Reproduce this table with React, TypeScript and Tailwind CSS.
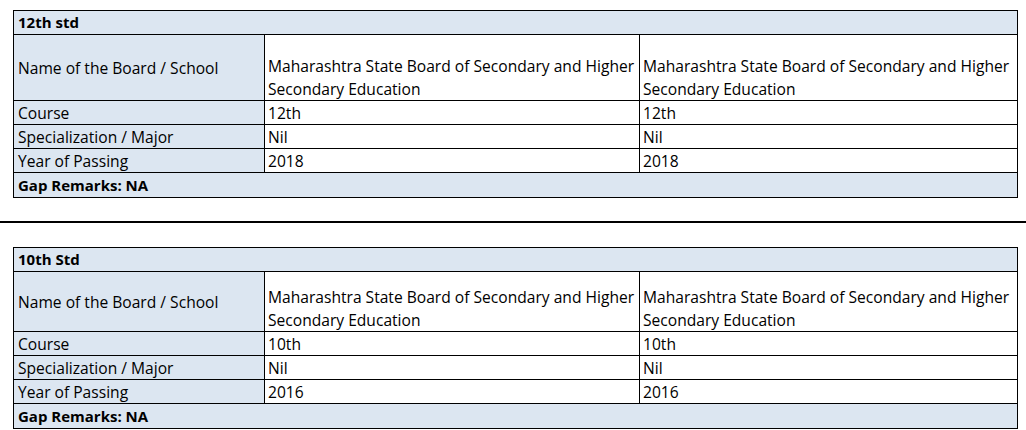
const font = { fontFamily: '"Open Sans", "Liberation Sans", sans-serif' };

interface Education {
  title: string;
  board: string;
  course: string;
  major: string;
  year: string;
  gap: string;
  nameRowHeight: string;
}

const records: Education[] = [
  {
    title: '12th std',
    board: 'Maharashtra State Board of Secondary and Higher Secondary Education',
    course: '12th',
    major: 'Nil',
    year: '2018',
    gap: 'NA',
    nameRowHeight: 'h-[66px]',
  },
  {
    title: '10th Std',
    board: 'Maharashtra State Board of Secondary and Higher Secondary Education',
    course: '10th',
    major: 'Nil',
    year: '2016',
    gap: 'NA',
    nameRowHeight: 'h-[60px]',
  },
];

function EducationTable({ rec }: { rec: Education }) {
  const label = 'border border-black bg-[#dce6f1] px-[4px] pt-[2px] pb-0 text-left font-normal leading-[21px]';
  const cell = 'border border-black bg-white px-[3px] pt-[2px] pb-0 leading-[21px]';
  const board = 'border border-black bg-white px-[3px] align-bottom leading-[23px]';
  const band = 'border border-black bg-[#dce6f1] px-[4px] text-[15px] font-bold leading-[23px]';

  return (
    <table className="ml-[13px] w-[1004px] table-fixed border-collapse text-[15.6px] text-black">
      <colgroup>
        <col className="w-[251px]" />
        <col className="w-[375px]" />
        <col className="w-[378px]" />
      </colgroup>
      <tbody>
        <tr className="h-[24px]">
          <td colSpan={3} className={band}>
            {rec.title}
          </td>
        </tr>
        <tr className={rec.nameRowHeight}>
          <td className={`${label} align-middle`}>Name of the Board / School</td>
          <td className={board}>
            <div className="relative top-px">{rec.board}</div>
          </td>
          <td className={board}>
            <div className="relative top-px">{rec.board}</div>
          </td>
        </tr>
        <tr className="h-[24px]">
          <td className={label}>Course</td>
          <td className={cell}>{rec.course}</td>
          <td className={cell}>{rec.course}</td>
        </tr>
        <tr className="h-[24px]">
          <td className={label}>Specialization / Major</td>
          <td className={cell}>{rec.major}</td>
          <td className={cell}>{rec.major}</td>
        </tr>
        <tr className="h-[24px]">
          <td className={label}>Year of Passing</td>
          <td className={cell}>{rec.year}</td>
          <td className={cell}>{rec.year}</td>
        </tr>
        <tr className="h-[25px]">
          <td colSpan={3} className={band}>
            Gap Remarks: {rec.gap}
          </td>
        </tr>
      </tbody>
    </table>
  );
}

export default function App() {
  return (
    <div className="h-[430px] w-[1026px] overflow-hidden bg-white pt-[10px]" style={font}>
      <EducationTable rec={records[0]} />
      <div className="mt-[23px] h-[2px] w-full bg-black" />
      <div className="pt-[24px]">
        <EducationTable rec={records[1]} />
      </div>
    </div>
  );
}
